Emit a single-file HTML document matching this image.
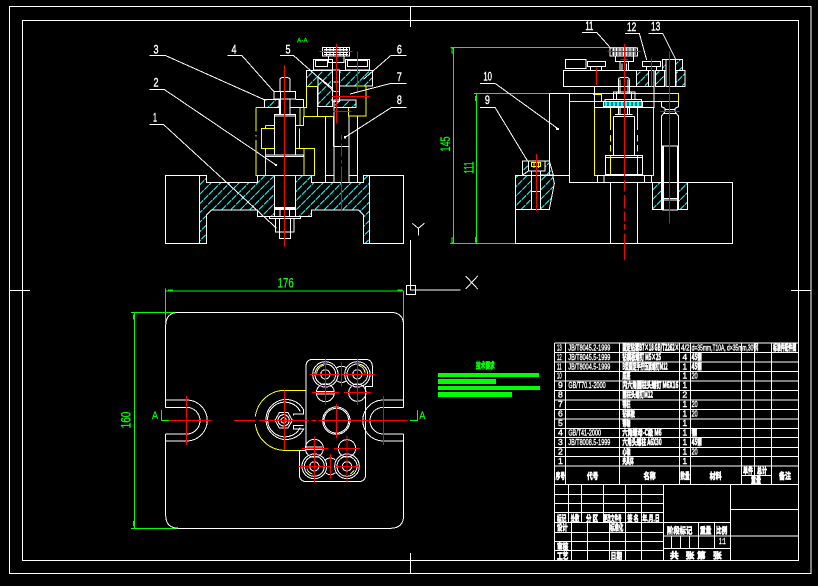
<!DOCTYPE html>
<html><head><meta charset="utf-8"><style>
html,body{margin:0;padding:0;background:#000;width:818px;height:586px;overflow:hidden}
svg{display:block;position:absolute;left:0;top:0}
svg *{vector-effect:non-scaling-stroke;shape-rendering:crispEdges}
.w{fill:none;stroke:#fff;stroke-width:1}
.y{fill:none;stroke:#ff0;stroke-width:1}
.r{fill:none;stroke:#f00;stroke-width:1}
.g{fill:none;stroke:#0f0;stroke-width:1}
.m{fill:none;stroke:#f0f;stroke-width:1;stroke-dasharray:2 2}
.cy{fill:none;stroke:#0ff;stroke-width:1;stroke-dasharray:6 1}
text{font-family:"Liberation Sans","Noto Sans CJK SC",sans-serif;fill:#fff;text-anchor:middle}
.n{font-size:36px;stroke:#fff;stroke-width:.4}
.gt{fill:#0f0;font-size:42px;stroke:#0f0;stroke-width:.3}
.t{font-size:26px;text-anchor:start;stroke:#fff;stroke-width:.4}
.b{font-size:26px;font-weight:bold;text-anchor:start;font-family:"Noto Sans CJK SC","Liberation Sans",sans-serif;stroke:#fff;stroke-width:.7}
</style></head><body>
<svg xmlns="http://www.w3.org/2000/svg" width="818" height="586" viewBox="0 0 818 586">
<defs>
<path id="hl" class="cy" d="M480 140l-540 540M508 140l-540 540M536 140l-540 540M564 140l-540 540M592 140l-540 540M620 140l-540 540M648 140l-540 540M676 140l-540 540M704 140l-540 540M732 140l-540 540M760 140l-540 540M788 140l-540 540M816 140l-540 540M844 140l-540 540M872 140l-540 540M900 140l-540 540M928 140l-540 540M956 140l-540 540M984 140l-540 540M1012 140l-540 540M1040 140l-540 540M1068 140l-540 540M1096 140l-540 540M1124 140l-540 540M1152 140l-540 540M1180 140l-540 540M1208 140l-540 540M1236 140l-540 540M1264 140l-540 540"/>
</defs>
<rect width="818" height="586" fill="#000"/>
<!-- frame -->
<path class="w" d="M9.5 6.5H811V573.5H9.5ZM22.5 20.5H798.5V560.5H22.5ZM9 290.5H30M791 290.5H811M410.5 6V27M410.5 553V573"/>
<!-- UCS -->
<g transform="translate(390,210) scale(.33333)">
<path class="w" d="M67 40L85 55L103 40M85 55V77M61 90V240H212M49 226h28v28h-28zM227 198L263 237M263 198L227 237"/>
</g>

<!-- LEFT SECTION VIEW -->
<g transform="translate(130,20) scale(.33333)">
<clipPath id="c1">
<path d="M208 466H230V488H382V466H434V590H382V570H245L230 585V670H208Z"/>
<path d="M718 466H700V488H545V466H496V590H545V570H685L700 585V670H718Z"/>
<path d="M530 152H608V205L564 170V260H562V200H530Z"/>
<path d="M564 170L608 205V260H564Z"/>
<path d="M628 152H728V198H628Z"/>
<path d="M612 240H678V262H612Z"/>
<path d="M403 238H447V262H403Z"/>
</clipPath>
<use href="#hl" clip-path="url(#c1)"/>
<path class="w" d="M208 466H230V488H382V466H434V590H382V570H245L230 585V670H208Z"/>
<path class="w" d="M718 466H700V488H545V466H496V590H545V570H685L700 585V670H718Z"/>
<path class="w" d="M208 466H106V670H208M718 466H820V670H718"/>
<path class="w" d="M530 152H608V205L564 170V260H562V200H530Z"/>
<path class="w" d="M564 170L608 205V260H564Z"/>
<path class="w" d="M628 152H728V198H628Z"/>
<path class="w" d="M612 240H678V262H612Z"/>
<path class="w" d="M403 238H447V262H403Z"/>
<path class="w" d="M578 82H658V108H578ZM595 108H642V128H595ZM550 118H608V150H550ZM556 122H592V140H556ZM646 118H718V150H646ZM652 122H712V140H652Z"/>
<path class="w" d="M582 88H654M582 93H654M582 98H654M582 103H654M590 84V106M600 84V106M610 84V106M620 84V106M630 84V106M640 84V106M650 84V106"/>
<path class="w" d="M608 150H628V245H608ZM611 186H626M611 214H626"/>
<path class="w" d="M450 215V180Q450 173 457 173H472Q480 173 480 180V215M432 215H496V237H432ZM448 237V283M480 237V283M452 215V283M496 238H520V262H480M433 283H496V405H433ZM433 288H496M406 405H520V410H406ZM433 466V565H496V466M433 562H496M433 568H496V590H433ZM450 568V590M478 568V590M418 590H512V596H418ZM436 596H492V636H436ZM448 596V655H482V596M448 636H482"/>
<path class="w" d="M586 288V488H683V288M612 262V380M610 288V380M657 288V380M612 380H657V488M612 380V488M586 466H612M657 466H683"/>
<path class="y" d="M530 200H564M530 200V262H510V316H496M522 262V290H612M562 262V290M678 198H708V288H655V262M508 325V385M378 262H434M378 262V335M378 345V350M378 360V466H553V385H496M434 325H394V385H434M406 316H434M406 316V325M406 385V466M522 385V466M496 316H520V290"/>
<path class="r" d="M463 135V680M620 72V310M568 95H668M682 95V218M606 229H720M610 274H665M634 345V360M634 370V410M634 420V430M634 440V575"/>
<path class="w" d="M58 106H105L405 240M292 106H335L432 215M450 106H490L610 212M783 106H830M783 106L700 178M783 190H830M783 190L660 222M785 262H830M785 262L645 352M58 208H102L438 435M58 313H100L440 625"/>
<path class="w" d="M436 433h4v4h-4zM643 350h4v4h-4z"/>
<text class="n" x="78" y="100" textLength="15" lengthAdjust="spacingAndGlyphs">3</text><text class="n" x="312" y="100" textLength="15" lengthAdjust="spacingAndGlyphs">4</text><text class="n" x="474" y="100" textLength="15" lengthAdjust="spacingAndGlyphs">5</text><text class="n" x="808" y="100" textLength="15" lengthAdjust="spacingAndGlyphs">6</text><text class="n" x="808" y="183" textLength="15" lengthAdjust="spacingAndGlyphs">7</text><text class="n" x="808" y="252" textLength="15" lengthAdjust="spacingAndGlyphs">8</text><text class="n" x="78" y="199" textLength="15" lengthAdjust="spacingAndGlyphs">2</text><text class="n" x="75" y="304" textLength="12" lengthAdjust="spacingAndGlyphs">1</text>
<text class="gt" style="font-size:20px" x="517" y="67" textLength="32" lengthAdjust="spacingAndGlyphs">A-A</text>
</g>

<!-- RIGHT VIEW -->
<g transform="translate(430,10) scale(.33333)">
<path class="g" d="M62 112H620M70 112V700M132 250H358M139 250V700M60 700H255"/>
<path class="g" d="M66 115h4v14h-4zM66 684h4v14h-4zM136 260h3v12h-3zM136 682h3v14h-3z" fill="#0f0"/>
<text class="gt" transform="translate(60,402) rotate(-90)" textLength="45" lengthAdjust="spacingAndGlyphs">145</text>
<text class="gt" transform="translate(130,473) rotate(-90)" textLength="36" lengthAdjust="spacingAndGlyphs">111</text>
<path class="w" d="M456 67H500L540 112M585 70H628L650 150M655 70H698L738 150M150 220H195L385 357M150 292H195L292 452"/>
<path class="w" d="M380 355h5v4h-5z"/>
<text class="n" x="478" y="60" textLength="24" lengthAdjust="spacingAndGlyphs">11</text><text class="n" x="605" y="63" textLength="28" lengthAdjust="spacingAndGlyphs">12</text><text class="n" x="677" y="62" textLength="28" lengthAdjust="spacingAndGlyphs">13</text><text class="n" x="173" y="212" textLength="26" lengthAdjust="spacingAndGlyphs">10</text><text class="n" x="172" y="282" textLength="15" lengthAdjust="spacingAndGlyphs">9</text>
<path class="w" d="M540 114H623V138H540ZM546 120H618M546 126H618M546 132H618M550 116V136M560 116V136M570 116V136M580 116V136M590 116V136M600 116V136M610 116V136M556 138H610V155H556ZM570 155V180M595 155V180M576 160V180M590 160V180"/>
<path class="w" d="M400 181H672V230H400ZM406 148H468V176H406ZM408 176H468M472 155H527V170H472ZM482 170V181M515 170V181M638 155H692V170H638ZM650 170V181M680 170V181"/>
<clipPath id="c2">
<path d="M620 181H655V230H620Z"/><path d="M677 181H704V230H677Z"/><path d="M738 181H765V230H738Z"/>
<path d="M697 148H708V181H697Z"/><path d="M736 148H758V181H736Z"/>
<path d="M668 518H695V598H668Z"/><path d="M745 518H773V598H745Z"/>
<path d="M256 496H305V598H256Z"/>
<path d="M332 496H368L373 520L358 598H332Z"/>
<path d="M278 453H295V483L278 495Z"/>
<path d="M345 453H358L370 495H332V483H345Z"/>
</clipPath>
<use href="#hl" clip-path="url(#c2)"/>
<path class="w" d="M620 181H655V230H620Z"/><path class="w" d="M677 181H704V230H677Z"/><path class="w" d="M738 181H765V230H738Z"/>
<path class="w" d="M697 148H708V181H697Z"/><path class="w" d="M736 148H758V181H736Z"/>
<path class="w" d="M708 148H736V230H708Z"/>
<path class="y" d="M420 250H745V274H420M490 250V254H514V274M493 292H670V497H493Z"/>
<path class="y" d="M541 292V360M541 375V395M541 405V425M541 435V497M622 292V360M622 375V395M622 405V425M622 435V497"/>
<path class="w" d="M358 250H420M358 250V450M418 250V518H908V700H256V496H418M541 518V700M622 518V700"/>
<path class="w" d="M493 230V292H672V230M565 250V210Q565 203 572 203H592Q598 203 598 210V250M570 208V250M594 208V250M550 268V246H615V268M560 246V268M604 246V268M525 268H635V274H525Z"/>
<path class="w" d="M520 274H638V290H520Z"/>
<path d="M523 279H636M523 285H636" fill="none" stroke="#0ff" stroke-width="2" stroke-dasharray="3 1"/>
<path class="w" d="M565 290V315M598 290V315M570 290V315M593 290V315M550 320V437M613 320V437M555 314H608M550 320H613M526 437H637V493H526ZM526 442H637M502 497H665V517H502ZM522 497V517M643 497V517"/>
<path class="w" d="M695 275V290L705 295V305L695 318V565H745V318L735 305V295L745 290V275M697 408H743V600H697ZM700 408V600M695 570H745M705 298H735M700 310H740"/>
<path class="w" d="M668 518H695V598H668Z"/><path class="w" d="M745 518H773V598H745Z"/>
<path class="w" d="M256 496H305V598H256Z"/>
<path class="w" d="M332 496H368L373 520L358 598H332Z"/>
<path class="w" d="M278 453H295V483L278 495Z"/>
<path class="w" d="M345 453H358L370 495H332V483H345Z"/>
<path class="w" d="M295 453H345V483H295ZM305 483V598M332 483V598M305 545H332M255 598H360M358 450V495"/>
<path class="y" d="M305 457H332V470H305ZM312 457V474M320 457V474M326 457V474"/>
<path class="r" d="M583 102V500M583 510V545M583 555V595M583 605V635M583 642V660M583 670V750M532 125H632M572 148H595M499 172V225M664 145V230M718 125V640M690 304H748M320 432V603"/>
</g>

<!-- PLAN VIEW -->
<g transform="translate(120,270) scale(.33333)">
<path class="g" d="M137 55V160M851 63V160M137 63H851M43 127V775M33 127H180M33 775H180M125 420V452H148M892 420V452H870"/>
<path class="g" d="M145 60h12v3h-12zM834 60h12v3h-12zM40 135h3v12h-3zM40 755h3v12h-3z" fill="#0f0"/>
<text class="gt" x="497" y="52" textLength="48" lengthAdjust="spacingAndGlyphs">176</text>
<text class="gt" transform="translate(32,450) rotate(-90)" textLength="50" lengthAdjust="spacingAndGlyphs">160</text>
<text class="gt" x="105" y="447" style="font-size:34px" textLength="18" lengthAdjust="spacingAndGlyphs">A</text><text class="gt" x="907" y="447" style="font-size:34px" textLength="18" lengthAdjust="spacingAndGlyphs">A</text>
<path class="w" d="M137 412V167Q137 127 177 127H811Q851 127 851 167V412M851 492V735Q851 775 811 775H177Q137 775 137 735V492"/>
<path class="w" d="M137 390H200A61 61 0 0 1 200 513H137M137 412H200A40 40 0 0 1 200 492H137M851 390H790A61 61 0 0 0 790 513H851M851 412H790A40 40 0 0 0 790 492H851M851 390V412M851 492V513"/>
<path class="y" d="M558 361H490A90 90 0 0 0 406 440M406 462A90 90 0 0 0 490 541H540"/>
<path class="w" d="M551 420A60 60 0 1 0 551 477H520V467H551M541 425A52 52 0 1 0 541 472M551 420L551 432H520V437"/>
<path class="w" d="M558 361V541M558 361V290Q558 268 580 268H735Q757 268 757 290V350H737V613Q737 635 715 635H560Q538 635 538 612V541H558"/>
<path class="w" d="M517 451L504 474H478L465 451L478 428H504Z"/>
<circle class="w" cx="491" cy="451" r="17"/><circle class="w" cx="491" cy="451" r="8"/>
<g>
<circle class="w" cx="616" cy="313" r="38"/><circle class="w" cx="616" cy="313" r="31"/><circle class="w" cx="616" cy="313" r="14"/>
<circle class="w" cx="712" cy="313" r="38"/><circle class="w" cx="712" cy="313" r="31"/><circle class="w" cx="712" cy="313" r="14"/>
<path class="w" d="M650 294A24 24 0 0 1 680 294M650 332A24 24 0 0 0 680 332"/>
<circle class="w" cx="616" cy="368" r="27"/><circle class="w" cx="712" cy="368" r="26"/>
<circle class="w" cx="649" cy="452" r="41"/><circle class="w" cx="649" cy="452" r="37"/>
<circle class="w" cx="583" cy="535" r="27"/><circle class="w" cx="681" cy="535" r="26"/>
<circle class="w" cx="583" cy="589" r="37"/><circle class="w" cx="583" cy="589" r="30"/><circle class="w" cx="583" cy="589" r="14"/>
<circle class="w" cx="681" cy="589" r="37"/><circle class="w" cx="681" cy="589" r="30"/><circle class="w" cx="681" cy="589" r="14"/>
<path class="w" d="M616 570A22 22 0 0 1 646 570M616 608A22 22 0 0 0 646 608"/>
</g>
<path class="w" d="M590 364H640M590 372H640M556 531H606M556 539H606"/>
<path class="m" d="M600 348H632M695 348H727M567 555H600M665 555H697"/>
<path class="y" d="M590 310A26 26 0 0 1 612 286M735 310A26 26 0 0 0 716 286M560 595A26 26 0 0 0 578 612M702 600A26 26 0 0 1 690 612"/>
<path class="r" d="M147 452H273M342 452H407M417 452H565M575 452H590M595 452H862M199 378V525M790 378V525M493 362V540M616 265V405M568 313H660M712 265V405M665 313H765M665 277V350M576 368H657M672 368H753M649 400V505M583 500V637M535 589H630M544 535H625M681 497V637M645 589H718M642 535H720M631 552V625"/>
</g>

<!-- NOTES -->
<g transform="translate(430,355) scale(.33333)">
<text class="b" x="138" y="41" style="fill:#0f0;stroke:#0f0" textLength="56" lengthAdjust="spacingAndGlyphs">技术要求</text>
<rect x="24" y="54" width="303" height="12" fill="#0f0"/>
<rect x="24" y="72" width="174" height="15" fill="#0f0"/>
<rect x="24" y="93" width="306" height="12" fill="#0f0"/>
<rect x="24" y="111" width="222" height="15" fill="#0f0"/>
</g>

<!-- PARTS TABLE -->
<g transform="translate(545,335) scale(.33333)">
<path class="w" d="M28 24H761M28 52H761M28 81H761M28 109H761M28 138H761M28 166H761M28 195H761M28 223H761M28 252H761M28 280H761M28 308H761M28 337H761M28 365H761M28 393H761M28 449H761M28 24V449M62 24V449M224 24V449M404 24V449M436 24V449M589 24V449M629 24V421M679 24V449M761 24V449M589 421H679"/>
<g>
<text class="t" x="36" y="47" textLength="14" lengthAdjust="spacingAndGlyphs">13</text><text class="t" x="70" y="47" textLength="126" lengthAdjust="spacingAndGlyphs">JB/T8045.2-1999</text><text class="b" x="232" y="47" textLength="170" lengthAdjust="spacingAndGlyphs">固定钻套B7×18 GB/T2262×</text><text class="t" x="408" y="47" textLength="26" lengthAdjust="spacingAndGlyphs">4/2</text><text class="t" x="440" y="47" textLength="200" lengthAdjust="spacingAndGlyphs">d=35mm,T10A, d×35mm,30钢</text><text class="b" x="684" y="47" textLength="70" lengthAdjust="spacingAndGlyphs">标准件配件图</text>
<text class="t" x="36" y="75" textLength="14" lengthAdjust="spacingAndGlyphs">12</text><text class="t" x="70" y="75" textLength="126" lengthAdjust="spacingAndGlyphs">JB/T8045.5-1999</text><text class="b" x="232" y="75" textLength="116" lengthAdjust="spacingAndGlyphs">钻模板螺钉 M5×25</text><text class="t" x="412" y="75">4</text><text class="b" x="440" y="75" textLength="30" lengthAdjust="spacingAndGlyphs">45钢</text>
<text class="t" x="36" y="104" textLength="14" lengthAdjust="spacingAndGlyphs">11</text><text class="t" x="70" y="104" textLength="126" lengthAdjust="spacingAndGlyphs">JB/T8004.5-1999</text><text class="b" x="232" y="104" textLength="136" lengthAdjust="spacingAndGlyphs">B型固定手拧压紧螺钉M12</text><text class="t" x="412" y="104">1</text><text class="b" x="440" y="104" textLength="30" lengthAdjust="spacingAndGlyphs">45钢</text>
<text class="t" x="36" y="131" textLength="14" lengthAdjust="spacingAndGlyphs">10</text><text class="b" x="232" y="131" textLength="24" lengthAdjust="spacingAndGlyphs">底座</text><text class="t" x="412" y="131">1</text><text class="t" x="440" y="131" textLength="18" lengthAdjust="spacingAndGlyphs">20</text>
<text class="t" x="39" y="159">9</text><text class="t" x="70" y="159" textLength="112" lengthAdjust="spacingAndGlyphs">GB/T70.1-2000</text><text class="b" x="232" y="159" textLength="168" lengthAdjust="spacingAndGlyphs">内六角圆柱头螺钉 M6X16</text><text class="t" x="412" y="159">1</text>
<text class="t" x="39" y="188">8</text><text class="b" x="232" y="188" textLength="92" lengthAdjust="spacingAndGlyphs">圆柱头螺钉M12</text><text class="t" x="412" y="188">2</text>
<text class="t" x="39" y="216">7</text><text class="b" x="232" y="216" textLength="24" lengthAdjust="spacingAndGlyphs">销柱</text><text class="t" x="412" y="216">1</text><text class="t" x="440" y="216" textLength="18" lengthAdjust="spacingAndGlyphs">20</text>
<text class="t" x="39" y="245">6</text><text class="b" x="232" y="245" textLength="38" lengthAdjust="spacingAndGlyphs">钻模板</text><text class="t" x="412" y="245">1</text><text class="t" x="440" y="245" textLength="18" lengthAdjust="spacingAndGlyphs">20</text>
<text class="t" x="39" y="273">5</text><text class="b" x="232" y="273" textLength="24" lengthAdjust="spacingAndGlyphs">销轴</text><text class="t" x="412" y="273">1</text>
<text class="t" x="39" y="302">4</text><text class="t" x="70" y="302" textLength="98" lengthAdjust="spacingAndGlyphs">GB/T41-2000</text><text class="b" x="232" y="302" textLength="118" lengthAdjust="spacingAndGlyphs">六角螺母-C级 M6</text><text class="t" x="412" y="302">1</text><text class="b" x="440" y="302" textLength="16" lengthAdjust="spacingAndGlyphs">钢</text>
<text class="t" x="39" y="330">3</text><text class="t" x="70" y="330" textLength="126" lengthAdjust="spacingAndGlyphs">JB/T8008.5-1999</text><text class="b" x="232" y="330" textLength="118" lengthAdjust="spacingAndGlyphs">六角头螺柱 A6X30</text><text class="t" x="412" y="330">1</text><text class="b" x="440" y="330" textLength="30" lengthAdjust="spacingAndGlyphs">45钢</text>
<text class="t" x="39" y="359">2</text><text class="b" x="232" y="359" textLength="24" lengthAdjust="spacingAndGlyphs">心轴</text><text class="t" x="412" y="359">1</text><text class="t" x="440" y="359" textLength="18" lengthAdjust="spacingAndGlyphs">20</text>
<text class="t" x="39" y="387">1</text><text class="b" x="232" y="387" textLength="34" lengthAdjust="spacingAndGlyphs">夹具体</text><text class="t" x="412" y="387">1</text>
<text class="b" x="32" y="432" textLength="28" lengthAdjust="spacingAndGlyphs">序号</text><text class="b" x="126" y="432" textLength="34" lengthAdjust="spacingAndGlyphs">代号</text><text class="b" x="296" y="432" textLength="36" lengthAdjust="spacingAndGlyphs">名称</text><text class="b" x="406" y="432" textLength="28" lengthAdjust="spacingAndGlyphs">数量</text><text class="b" x="494" y="432" textLength="36" lengthAdjust="spacingAndGlyphs">材料</text><text class="b" x="594" y="416" textLength="30" lengthAdjust="spacingAndGlyphs">单件</text><text class="b" x="636" y="416" textLength="30" lengthAdjust="spacingAndGlyphs">总计</text><text class="b" x="618" y="446" textLength="30" lengthAdjust="spacingAndGlyphs">重量</text><text class="b" x="702" y="432" textLength="36" lengthAdjust="spacingAndGlyphs">备注</text>
</g>
</g>

<!-- TITLE BLOCK -->
<g transform="translate(545,480) scale(.33333)">
<path class="w" d="M28 13V241M28 43H355M28 70H355M28 98H355M28 127H355M28 157H355M28 184H355M28 212H355M28 241H761M70 13V127M109 13V127M175 13V127M241 13V241M289 13V241M79 127V241M127 127V241M193 127V241M355 13V241M556 13V241M761 13V241M355 127H556M355 168H556M355 205H556M460 127V205M508 127V205M380 168V205M406 168V205M433 168V205M556 88H761M556 168H761"/>
<g>
<text class="b" x="36" y="124" textLength="28" lengthAdjust="spacingAndGlyphs">标记</text><text class="b" x="77" y="124" textLength="26" lengthAdjust="spacingAndGlyphs">处数</text><text class="b" x="123" y="124" textLength="36" lengthAdjust="spacingAndGlyphs">分 区</text><text class="b" x="176" y="124" textLength="54" lengthAdjust="spacingAndGlyphs">更改文件号</text><text class="b" x="247" y="124" textLength="34" lengthAdjust="spacingAndGlyphs">签 名</text><text class="b" x="292" y="124" textLength="52" lengthAdjust="spacingAndGlyphs">年.月.日</text>
<text class="b" x="36" y="152" textLength="32" lengthAdjust="spacingAndGlyphs">设计</text><text class="b" x="195" y="152" textLength="40" lengthAdjust="spacingAndGlyphs">标准化</text>
<text class="b" x="36" y="208" textLength="34" lengthAdjust="spacingAndGlyphs">审核</text><text class="b" x="36" y="237" textLength="34" lengthAdjust="spacingAndGlyphs">工艺</text><text class="b" x="197" y="237" textLength="34" lengthAdjust="spacingAndGlyphs">日期</text>
<text class="b" x="366" y="160" textLength="76" lengthAdjust="spacingAndGlyphs">阶段标记</text><text class="b" x="465" y="160" textLength="34" lengthAdjust="spacingAndGlyphs">重量</text><text class="b" x="513" y="160" textLength="34" lengthAdjust="spacingAndGlyphs">比例</text>
<text class="t" x="522" y="192" textLength="20" lengthAdjust="spacingAndGlyphs">1:1</text>
<text class="b" x="375" y="235">共</text><text class="b" x="422" y="235">张</text><text class="b" x="456" y="235">第</text><text class="b" x="504" y="235">张</text>
</g>
</g>
</svg>
</body></html>
